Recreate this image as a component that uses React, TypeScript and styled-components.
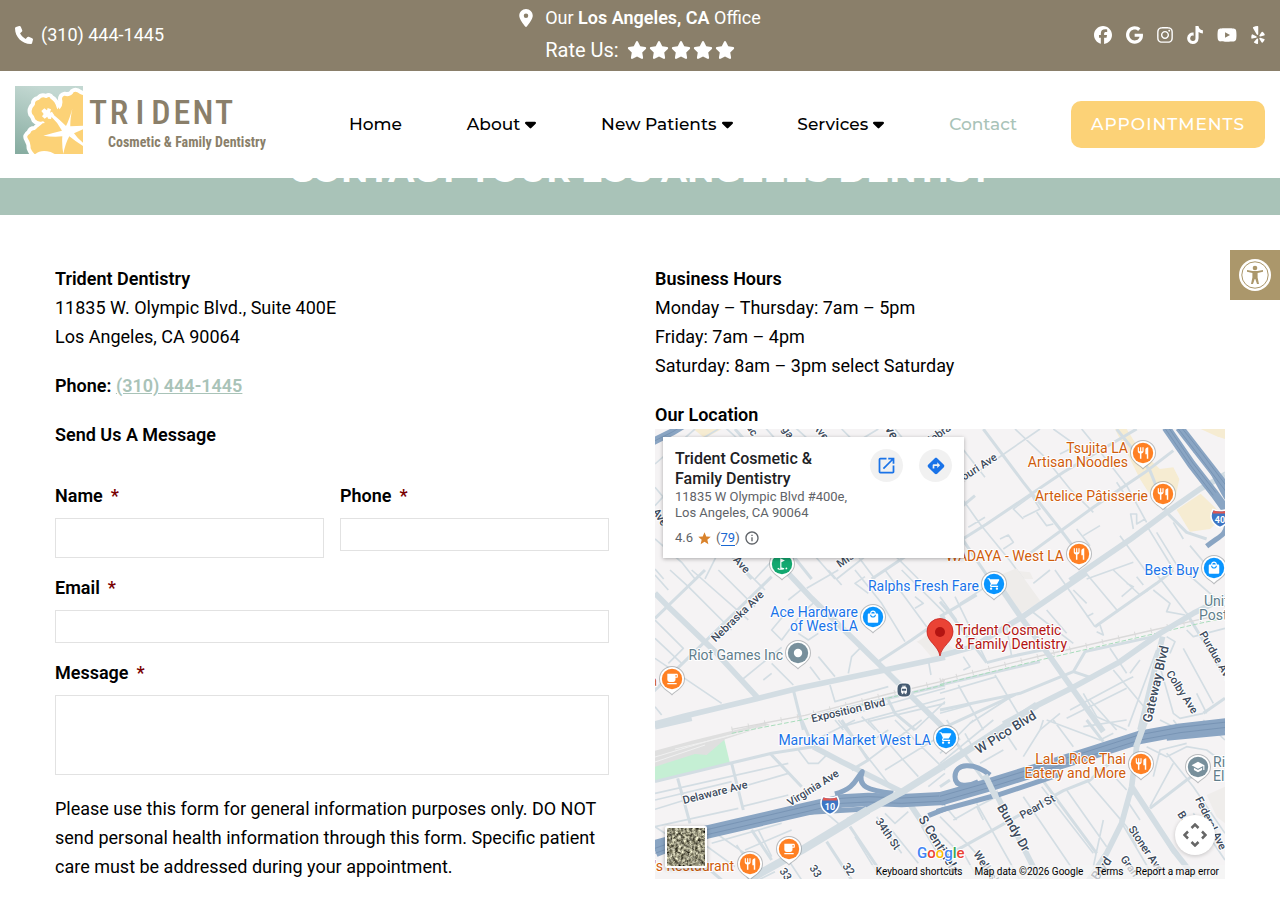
import React from 'react';
import styled, { createGlobalStyle } from 'styled-components';
import {
  FaPhone, FaLocationDot, FaStar, FaFacebook, FaGoogle, FaInstagram,
  FaTiktok, FaYoutube, FaYelp, FaCaretDown,
} from 'react-icons/fa6';
import {
  MdRestaurant, MdLocalCafe, MdShoppingCart, MdLocalMall, MdSchool, MdTram,
  MdGolfCourse, MdOpenInNew, MdDirections, MdInfoOutline, MdStar,
} from 'react-icons/md';
import type { IconType } from 'react-icons';

const color = {
  taupe: '#8a7f6a',
  sage: '#a9c3b8',
  sun: '#fcd277',
  gold: '#ab976b',
  line: '#e2e2e2',
  ink: '#000',
};
const display = '"Montserrat", "Inter", "Open Sans", sans-serif';

const GlobalStyle = createGlobalStyle`
  *, *::before, *::after { box-sizing: border-box; }
  body {
    margin: 0;
    background: #fff;
    color: ${color.ink};
    font: 400 18px/29px "Roboto", "Liberation Sans", sans-serif;
  }
  p, h1, h2 { margin: 0; }
  strong { font-weight: 600; }
  a { color: inherit; text-decoration: none; }
`;

/* ---------- header ---------- */

const Header = styled.header`
  position: fixed;
  z-index: 10;
  top: 0;
  left: 0;
  right: 0;
  background: #fff;
`;

const TopBar = styled.div`
  display: grid;
  grid-template-columns: 1fr auto 1fr;
  align-items: center;
  min-height: 71px;
  padding: 2px 15px 4px;
  background: ${color.taupe};
  color: #fff;
`;

const Glyph = styled.span<{ $w: number }>`
  display: block;
  flex: none;
  svg { display: block; width: ${p => p.$w}px; height: 18px; }
`;

const PhoneLink = styled.a`
  display: flex;
  align-items: center;
  gap: 8px;
  justify-self: start;
`;

const OfficeInfo = styled.div`
  display: flex;
  flex-direction: column;
  align-items: center;
  gap: 2px;
`;

const OfficeLink = styled.a`
  display: flex;
  align-items: center;
  gap: 12px;
`;

const Rating = styled.a`
  display: flex;
  align-items: center;
  gap: 8px;
  font-size: 20px;
  line-height: 32px;
`;

const Stars = styled.span`
  display: flex;
  gap: 2px;
`;

const Social = styled.div`
  display: flex;
  gap: 14px;
  justify-self: end;
`;

const NavBar = styled.div`
  display: flex;
  align-items: center;
  padding: 15px 15px 24px;
`;

const Logo = styled.a`
  flex: none;
  width: 250px;
  svg { display: block; }
`;

const Nav = styled.nav`
  display: flex;
  flex: 1;
  justify-content: space-between;
  margin: 8px 54px 0 84px;
`;

const NavLink = styled.a<{ $active?: boolean }>`
  display: flex;
  align-items: center;
  gap: 5px;
  color: ${p => (p.$active ? color.sage : color.ink)};
  font: 500 17px/29px ${display};
  white-space: nowrap;
`;

const Appointments = styled.a`
  margin-top: 8px;
  padding: 9px 20px;
  border-radius: 10px;
  background: ${color.sun};
  color: #fff;
  font: 500 17px/29px ${display};
  letter-spacing: 1px;
  text-transform: uppercase;
`;

/* ---------- page ---------- */

const Banner = styled.div`
  padding: 148px 15px 23px;
  background: ${color.sage};
  color: #fff;
  text-align: center;
`;

const BannerTitle = styled.h1`
  font: 700 34px/44px ${display};
  text-transform: uppercase;
`;

const Columns = styled.main`
  display: grid;
  grid-template-columns: 1fr 1fr;
  gap: 30px;
  max-width: 1200px;
  margin: 0 auto;
  padding: 49px 15px 19px;
`;

const Details = styled.section`
  display: flex;
  flex-direction: column;
  gap: 20px;
  padding-right: 16px;
`;

const Location = styled.section`
  display: flex;
  flex-direction: column;
  p { margin-bottom: 20px; }
`;

const Heading = styled.h2`
  font-size: 18px;
  font-weight: 600;
  line-height: 29px;
`;

const TextLink = styled.a`
  color: ${color.sage};
  text-decoration: underline;
`;

const Form = styled.form`
  display: flex;
  flex-direction: column;
  gap: 15px;
  padding-top: 12px;
`;

const FieldRow = styled.div`
  display: grid;
  grid-template-columns: 1fr 1fr;
  align-items: start;
  gap: 16px;
`;

const Field = styled.div`
  display: flex;
  flex-direction: column;
  gap: 8px;
`;

const Label = styled.label`
  font-weight: 600;
`;

const Required = styled.span`
  margin-left: 8px;
  color: #790000;
`;

const TextInput = styled.input<{ $tall?: boolean }>`
  width: 100%;
  height: ${p => (p.$tall ? 40 : 33)}px;
  padding: 4px 8px;
  border: 1px solid ${color.line};
  font: inherit;
`;

const MessageInput = styled.textarea`
  display: block;
  width: 100%;
  height: 80px;
  padding: 4px 8px;
  border: 1px solid ${color.line};
  font: inherit;
  resize: none;
`;

const Notice = styled.p`
  padding-top: 4px;
`;

const AccessButton = styled.button`
  position: fixed;
  z-index: 11;
  top: 250px;
  right: 0;
  display: grid;
  place-items: center;
  width: 50px;
  height: 50px;
  padding: 0;
  border: 0;
  background: ${color.gold};
`;

/* ---------- map ---------- */

const MapFrame = styled.div`
  position: relative;
  height: 450px;
  overflow: hidden;
  background: #f5f3f4;
`;

const MapSvg = styled.svg`
  display: block;
  width: 100%;
  height: 100%;
  font-family: "Roboto", sans-serif;
  text { paint-order: stroke; stroke: #fff; stroke-width: 2px; stroke-linejoin: round; }
`;

const PlaceCard = styled.div`
  position: absolute;
  top: 8px;
  left: 8px;
  display: flex;
  align-items: flex-start;
  gap: 16px;
  width: 301px;
  padding: 12px;
  background: #fff;
  box-shadow: 0 1px 4px rgba(0, 0, 0, 0.3);
`;

const PlaceText = styled.div`
  flex: 1;
  color: #5f6368;
  font-size: 13px;
  line-height: 16px;
  white-space: nowrap;
`;

const PlaceName = styled.div`
  color: #202124;
  font-size: 16px;
  font-weight: 500;
  line-height: 20px;
`;

const PlaceRating = styled.div`
  display: flex;
  align-items: center;
  gap: 4px;
  margin-top: 9px;
  a { color: #1967d2; border-bottom: 1px solid; }
`;

const PlaceButton = styled.button`
  display: grid;
  flex: none;
  place-items: center;
  width: 33px;
  height: 33px;
  padding: 0;
  border: 0;
  border-radius: 50%;
  background: #f1f1f1;
  color: #1a73e8;
`;

const SatelliteButton = styled.button`
  position: absolute;
  left: 10px;
  bottom: 11px;
  width: 42px;
  height: 42px;
  padding: 0;
  border: 2px solid #fff;
  border-radius: 2px;
  box-shadow: 0 1px 4px rgba(0, 0, 0, 0.3);
  svg { display: block; }
`;

const PanButton = styled.button`
  position: absolute;
  right: 10px;
  bottom: 24px;
  display: grid;
  place-items: center;
  width: 40px;
  height: 40px;
  padding: 0;
  border: 0;
  border-radius: 50%;
  background: #fff;
  box-shadow: 0 1px 4px rgba(0, 0, 0, 0.2);
`;

const MapFooter = styled.div`
  position: absolute;
  right: 0;
  bottom: 0;
  display: flex;
  color: #000;
  font-size: 10px;
  line-height: 14px;
  white-space: nowrap;
`;

const FooterItem = styled.a`
  padding: 0 6px;
  background: rgba(245, 245, 245, 0.7);
`;

const ROAD = '#d3dde3';
const FREEWAY = '#8aa5c3';
const FREEWAY_EDGE = '#6f8cad';

type TileData = {
  x: number;
  y: number;
  areas?: [string, string][];
  minor: string;
  medium?: string;
  major?: string;
  rail?: string;
  ramps?: string;
  freeway?: string;
  freewayWidth?: number;
  lanes?: string;
};

/* Road geometry, in units of a third of a map pixel, relative to each tile's origin. */
const tiles: TileData[] = [
  {
    x: 0, y: 0,
    areas: [['#f6ecd2', 'M115 0H200L150 28Z']],
    minor: 'M0 105L120 0M0 230L90 130M0 175L130 330M0 330L80 400L120 450M0 420L26 450M210 -5L260 40M330 -5L370 40M420 -5L470 40M560 0L600 40M140 30L190 0M620 30L670 0M800 40L860 0L880 -20M190 370L150 450M300 450L370 375M545 450L640 375M470 370L540 450M600 370L660 450M720 380L790 450M900 30L990 145M720 0L745 30',
    medium: 'M220 370L290 450M410 375L470 450M240 0L275 40M650 450L770 370M900 250L960 200',
    freeway: 'M-10 40L50 10L90 -14',
    freewayWidth: 22,
    lanes: 'M-10 40L50 10L90 -14',
  },
  {
    x: 305, y: 0,
    areas: [
      ['#f6ecd2', 'M465 0H500L540 65L600 120L640 115L658 150L645 212L592 232L540 150Z'],
      ['#f6ecd2', 'M650 242L722 194L792 262L750 300L690 308Z'],
      ['#f6ecd2', 'M722 0H795V30L770 22Z'],
      ['#efedeb', 'M165 425L210 430L220 450H150Z'],
    ],
    minor: 'M0 165L110 90L240 0M165 0L250 80L330 180L400 250M280 0L350 50L300 75M365 0L410 55L500 170L560 280M0 200L60 285L150 395L190 450M25 295L75 265M190 270L160 240L215 200L240 240L190 265M230 250L260 290L280 285M120 330L145 318L160 340L130 360M370 320L420 290M350 300L390 350M520 300L512 255L530 255L530 285L555 270M560 290L640 420M480 320L560 430M590 310L670 440M470 160L490 190M640 280L670 330M380 450L520 400M760 150L795 130M690 350L740 410',
    medium: 'M0 335L80 285L310 130L530 0M180 395L310 300L400 235L555 130L640 65M70 0L190 160L300 300L360 380M470 0L570 125L620 250L680 310L740 330M0 320L85 445',
    major: 'M330 455L510 332L620 250L720 180L795 138',
    ramps: 'M700 62C730 62 770 160 805 215M740 352C780 320 795 320 800 290',
    freeway: 'M618 -5L694 105L764 195L800 245M658 -5L724 80L810 190',
    freewayWidth: 26,
    lanes: 'M613 -5L690 107L760 199M623 -8L699 103L768 191M653 -3L719 83L798 188M664 -5L729 77L806 180',
  },
  {
    x: 0, y: 141,
    areas: [['#efedeb', 'M790 215L820 190L870 240V255L830 262Z']],
    minor: 'M0 15L40 60M45 0L100 50L230 180M110 0L280 150M190 0L300 110M270 0L330 60M0 150L85 235L40 280M0 205L80 280M0 265L200 400M150 215L205 270M0 410L20 435M260 330L380 232M350 280L415 345M325 330L350 310M455 55L550 0M520 0L560 45M600 0L680 100L750 215M690 0L815 170M740 0L870 130M820 270L828 315M525 345L540 395L700 350M490 260L540 320M580 310L590 260L620 230M400 90L440 58L480 95L440 130L380 210L350 180L400 120M430 190L460 210L490 190M465 290L495 330M540 450L565 480M620 440L660 480M560 470L870 385M780 480L870 395M600 430L870 355M640 455L870 400M630 20L600 40L640 70M780 80L805 100L780 115',
    medium: 'M0 145L150 0M-5 365L150 215L350 20M415 360L445 480M670 275L770 210L870 140M470 440L700 385L870 345M700 390L720 430L780 480',
    major: 'M0 70L40 110L180 245L310 385M395 5L470 85L690 300L760 370L870 478M0 462L90 438L305 386L430 355L690 300L870 262',
    rail: 'M230 478L450 436L700 372L870 332',
  },
  {
    x: 285, y: 141,
    areas: [['#eeecea', 'M155 25L230 -5L303 95L243 130Z'], ['#eeecea', 'M-70 215L-20 190L40 235L0 262Z']],
    minor: 'M0 80L50 150M45 80L140 275M170 30L60 100M280 40L330 0M270 120L400 220M320 120L380 190M345 0L465 170M430 0L535 125M480 165L490 195L470 185M520 0L600 75L625 60M590 20L610 45M545 80L580 50L560 40M640 60L690 100L680 125L735 135M640 0L740 130M730 0L855 110M0 370L170 320M55 345L130 480M165 315L240 440M90 460L230 370M0 430L90 405M510 235L560 310M520 300L620 420M390 420L540 340L580 320M380 445L560 355M430 370L470 440L560 480M565 470L650 240M660 290L700 430L720 445L790 430M730 235L820 400M680 200L705 215L690 250M740 180L760 200L855 175M770 370L800 430M600 270L570 310M450 390L530 480M200 170L215 260M70 260L90 290L70 300M400 60L440 100M440 140L460 130M300 480L360 430',
    medium: 'M0 420L240 370L400 305L460 325M400 305L435 245L640 200M140 278L210 260L330 235M140 278L30 130L0 95M0 140L110 75M465 170L650 40L700 0M0 345L300 275M0 478L230 372M740 130L855 320M790 430L855 385',
    major: 'M0 258L100 230L245 142L440 8M180 50L245 145L330 260L400 360L490 485M190 462L290 407L400 352L540 275L660 190L760 130L860 80M600 480L668 200',
    rail: 'M0 332L300 258L640 180L780 148L855 132',
  },
  {
    x: 0, y: 291,
    areas: [
      ['#c5efd4', 'M0 115L207 55L225 130L0 185Z'],
      ['#dfdfdf', 'M0 92L110 62L330 8L345 14L210 58L155 105L120 102L0 140Z'],
    ],
    minor: 'M0 220L400 130M0 240L230 185M0 268L90 240M110 245L400 160M0 320L250 265M260 260L400 225M310 330L350 410M150 375L240 440M190 345L270 400M170 370L380 310M270 390L410 330M430 90L460 130L490 130L520 100M0 320L60 360M665 290L740 400M515 280L555 315M690 280L720 310L760 275M550 0L700 190M640 0L745 120L790 170M480 60L600 0M640 120L800 0M690 150L870 40M720 0L870 150M820 200L870 160M310 480L360 455M600 350L680 480M400 420L440 480M245 375L300 460M800 320L860 420M640 70L700 30M710 330L790 430',
    medium: 'M0 185L225 130L350 100L475 80M68 175L105 310M230 130L265 270M345 100L440 200M440 0L475 80M515 365L590 480M585 320L690 475M560 0L640 120L590 150M290 330L350 420M60 360L200 480',
    major: 'M0 20L110 -5M475 80L560 125L740 215L810 320',
    ramps: 'M540 222C600 205 600 180 622 155C605 200 640 212 715 220M440 278L620 268L660 258M820 287L870 267',
    freeway: 'M0 392L60 368L160 335L450 268L560 243L640 238L740 242L870 235M0 380L80 358',
    lanes: 'M0 385L160 328L450 260L560 235L640 230L740 234L870 227M0 400L160 343L450 276L560 250L640 246L740 250L870 243',
  },
  {
    x: 285, y: 291,
    areas: [['#efedeb', 'M800 225L855 200V310L830 290Z']],
    minor: 'M0 130L160 0M0 100L100 0M20 0L60 60M75 40L100 85M120 130L190 90M250 110L300 30L310 0M340 0L400 80M230 90L190 30M320 0L480 60L520 40M430 20L560 0M110 260L40 300M60 380L110 470M110 250L240 480M250 230L420 480M305 200L460 400M440 180L560 320L590 380M380 210L500 380M505 150L560 210M680 100L760 200L855 340M660 0L720 30M700 130L630 260M0 290L90 380L180 480M170 230L110 260L130 300M490 300L460 440M640 170L660 90L740 70M580 220L560 240L600 300M620 80L680 110L740 80L800 90L855 130M760 280L855 420M540 300L640 470M0 340L60 400M700 0L730 40M790 0L855 60M0 240L50 300M620 270L700 400',
    medium: 'M60 385L230 290L370 212L450 180L520 120M630 265L740 180L800 140M440 0L490 65M50 70L130 178M300 170L470 400M0 410L60 385M0 200L30 180',
    major: 'M165 215L300 480M575 200L700 390L775 485M612 -5L590 80L575 200L545 310L500 400L440 490',
    ramps: 'M150 165C100 125 45 130 45 170C45 205 90 198 115 185M-10 274L160 228M175 225L355 165M680 55L855 38',
    freeway: 'M0 237L150 194L300 147L450 100L600 52L720 30L860 14',
    lanes: 'M0 229L150 186L300 139L450 92L600 44L720 22L860 6M0 245L150 202L300 155L450 108L600 60L720 38L860 22',
  },
];

const MapTiles = () => (
  <g fill="none" strokeLinejoin="round">
    {tiles.map(t => (
      <g key={`${t.x}-${t.y}`} transform={`translate(${t.x} ${t.y}) scale(0.3333)`}>
        {t.areas?.map(([fill, d]) => <path key={d} d={d} fill={fill} />)}
        <path d={t.minor} stroke={ROAD} strokeWidth="5" />
        <path d={t.medium} stroke={ROAD} strokeWidth="9" />
      </g>
    ))}
    <path d="M0 328L60 310L115 296M0 333L50 316M20 320L70 308L100 299" stroke="#f0f0f0" strokeWidth="1" />
    {tiles.map(t => (
      <g key={`${t.x}-${t.y}`} transform={`translate(${t.x} ${t.y}) scale(0.3333)`}>
        <path d={t.rail} stroke="#dadada" strokeWidth="4" />
        <path d={t.rail} stroke="#dadada" strokeWidth="16" strokeDasharray="3 47" />
        <path d={t.rail} stroke="#a9dcbc" strokeWidth="3" strokeDasharray="14 6" transform="translate(0 12)" />
        <path d={t.major} stroke={ROAD} strokeWidth="17" />
        <path d={t.ramps} stroke={FREEWAY} strokeWidth="15" />
        <path d={t.freeway} stroke={FREEWAY} strokeWidth={t.freewayWidth ?? 40} />
        <path d={t.lanes} stroke={FREEWAY_EDGE} strokeWidth="2" />
      </g>
    ))}
    <path d="M330 346L341 369M490 293L481 318" stroke={ROAD} strokeWidth="6" />
    <path d="M193 392L247 363L290 336L382 276" stroke={ROAD} strokeWidth="7" />
    <path d="M93 451L147 421L213 381" stroke={ROAD} strokeWidth="8" />
  </g>
);

type RoadName = { t: string; x: number; y: number; r: number; big?: boolean; at?: 'start' | 'end' };
const roadNames: RoadName[] = [
  { t: 'Nebraska Ave', x: 85, y: 190, r: -44 },
  { t: 'Exposition Blvd', x: 194, y: 285, r: -13 },
  { t: 'Purdue Ave', x: 544, y: 205, r: 60, at: 'start' },
  { t: 'Colby Ave', x: 524, y: 265, r: 57 },
  { t: 'Gateway Blvd', x: 505, y: 256, r: -77, big: true },
  { t: 'W Pico Blvd', x: 353, y: 307, r: -32, big: true },
  { t: 'Delaware Ave', x: 61, y: 367, r: -14 },
  { t: 'Virginia Ave', x: 160, y: 362, r: -32 },
  { t: '34th St', x: 230, y: 407, r: 56 },
  { t: 'S Centinela', x: 263, y: 390, r: 58, big: true, at: 'start' },
  { t: 'Bundy Dr', x: 355, y: 401, r: 60, big: true },
  { t: 'Pearl St', x: 384, y: 381, r: -29 },
  { t: 'Stoner Ave', x: 473, y: 400, r: 56, at: 'start' },
  { t: 'Federal Ave', x: 540, y: 370, r: 64, at: 'start' },
  { t: 'Wellesley', x: 318, y: 425, r: 56, at: 'start' },
  { t: 'Gran', x: 465, y: 430, r: 54, at: 'start' },
  { t: 'Ba', x: 522, y: 385, r: 58, at: 'start' },
  { t: 'Blvd', x: 450, y: 442, r: -55, big: true },
  { t: 'Missouri Ave', x: 343, y: 30, r: -33, at: 'end' },
  { t: 'Nebrask', x: 306, y: -6, r: -35, at: 'end' },
  { t: 'Ave', x: 163, y: 5, r: 52 },
  { t: 'Ave', x: 231, y: 2, r: 60, big: true },
  { t: 'ac', x: 94, y: 3, r: 58 },
  { t: 'ga', x: 130, y: 5, r: 56 },
  { t: 'Ave', x: 2, y: 90, r: 56 },
  { t: 'Ave', x: 84, y: 138, r: 48 },
  { t: 'Miss', x: 185, y: 139, r: -35, at: 'start' },
  { t: '33', x: 124, y: 442, r: 56, at: 'start' },
  { t: '33', x: 154, y: 439, r: 56, at: 'start' },
  { t: '32', x: 187, y: 437, r: 56, at: 'start' },
];

const ORANGE = '#cf5c0b';
const BLUE = '#1a73e8';
const SLATE = '#607d8b';
type PoiName = { t: string[]; x: number; y: number; c: string; at?: 'start' };
const poiNames: PoiName[] = [
  { t: ['Tsujita LA', 'Artisan Noodles'], x: 473, y: 24, c: ORANGE },
  { t: ['Artelice Pâtisserie'], x: 493, y: 72, c: ORANGE },
  { t: ['WADAYA - West LA'], x: 409, y: 132, c: ORANGE },
  { t: ['Best Buy'], x: 544, y: 146, c: BLUE },
  { t: ['Ralphs Fresh Fare'], x: 324, y: 162, c: BLUE },
  { t: ['Ace Hardware', 'of West LA'], x: 203, y: 188, c: BLUE },
  { t: ['Riot Games Inc'], x: 128, y: 231, c: SLATE },
  { t: ['Trident Cosmetic', '& Family Dentistry'], x: 300, y: 206, c: '#b31412', at: 'start' },
  { t: ['Unit'], x: 549, y: 177, c: SLATE, at: 'start' },
  { t: ['Post'], x: 544, y: 191, c: SLATE, at: 'start' },
  { t: ['Marukai Market West LA'], x: 276, y: 316, c: BLUE },
  { t: ['LaLa Rice Thai', 'Eatery and More'], x: 471, y: 335, c: ORANGE },
  { t: ['Ri', 'El'], x: 558, y: 338, c: SLATE, at: 'start' },
  { t: ["'s Restaurant"], x: 79, y: 442, c: ORANGE },
  { t: ['a'], x: 2, y: 257, c: ORANGE },
];

const pins: { x: number; y: number; c: string; icon?: IconType }[] = [
  { x: 488, y: 24, c: '#ff8023', icon: MdRestaurant },
  { x: 508, y: 65, c: '#ff8023', icon: MdRestaurant },
  { x: 424, y: 125, c: '#ff8023', icon: MdRestaurant },
  { x: 559, y: 139, c: '#0a95ff', icon: MdLocalMall },
  { x: 339, y: 155, c: '#0a95ff', icon: MdShoppingCart },
  { x: 218, y: 188, c: '#0a95ff', icon: MdLocalMall },
  { x: 143, y: 224, c: '#78909c' },
  { x: 17, y: 250, c: '#ff8023', icon: MdLocalCafe },
  { x: 127, y: 135, c: '#13a870', icon: MdGolfCourse },
  { x: 291, y: 309, c: '#0a95ff', icon: MdShoppingCart },
  { x: 486, y: 335, c: '#ff8023', icon: MdRestaurant },
  { x: 543, y: 338, c: '#78909c', icon: MdSchool },
  { x: 134, y: 420, c: '#ff8023', icon: MdLocalCafe },
  { x: 95, y: 435, c: '#ff8023', icon: MdRestaurant },
];

const Pin = ({ x, y, c, icon: Icon }: (typeof pins)[number]) => (
  <g transform={`translate(${x} ${y})`}>
    <path d="M0 16.5C-3 12.5-13 9-13 0A13 13 0 0 1 13 0C13 9 3 12.500 0 16.500Z" fill="#7d8388" opacity=".5" />
    <path d="M0 15C-3 11.500-12 8.500-12 0A12 12 0 0 1 12 0C12 8.500 3 11.500 0 15Z" fill="#fff" />
    <circle r="10.2" fill={c} />
    {Icon ? <Icon x="-7" y="-7" size={14} color="#fff" /> : <circle r="4.2" fill="#fff" />}
  </g>
);

const ShieldNumber = styled.text`
  && { stroke: none; }
`;

const Shield = ({ x, y, n }: { x: number; y: number; n: string }) => (
  <g transform={`translate(${x} ${y})`}>
    <path d="M-7-8.500Q0-6 7-8.500Q10-4 8.500 1Q7 6.500 0 9.500Q-7 6.500-8.500 1Q-10-4-7-8.500Z" fill="#3d76c4" stroke="#fff" strokeWidth="1.5" />
    <path d="M-6.500-7.500Q0-5.500 6.500-7.500L7.500-4.500H-7.500Z" fill="#e2564f" />
    <ShieldNumber y="5" textAnchor="middle" fontSize="9" fontWeight="700" fill="#fff">{n}</ShieldNumber>
  </g>
);

const MapDrawing = () => (
  <MapSvg viewBox="0 0 570 450" preserveAspectRatio="xMidYMid slice" role="img" aria-label="Map of West Los Angeles">
    <MapTiles />
    <g fill="#3c4a5c" fontWeight="500">
      {roadNames.map((n, i) => (
        <text
          key={i}
          transform={`translate(${n.x} ${n.y}) rotate(${n.r})`}
          textAnchor={n.at ?? 'middle'}
          fontSize={n.big ? 13 : 11}
        >
          {n.t}
        </text>
      ))}
    </g>
    <Shield x={175} y={376} n="10" />
    <Shield x={565} y={89} n="40" />
    <g transform="translate(249 261)">
      <rect x="-7" y="-7" width="14" height="14" rx="5" fill="#455a70" stroke="#fff" />
      <MdTram x="-5" y="-5" size={10} color="#fff" />
    </g>
    {poiNames.map(p => (
      <text key={p.t[0]} textAnchor={p.at ?? 'end'} fontSize="14" fill={p.c}>
        {p.t.map((line, i) => <tspan key={line} x={p.x} y={p.y + i * 14}>{line}</tspan>)}
      </text>
    ))}
    {pins.map(p => <Pin key={`${p.x}-${p.y}`} {...p} />)}
    <path d="M285 227C283 216 272 213 272 202.500A13 13 0 0 1 298 202.500C298 213 287 216 285 227Z" fill="#ea4335" stroke="#c5221f" strokeWidth=".8" />
    <circle cx="285" cy="203" r="5" fill="#b31412" />
    <text x="262" y="429" fontSize="15" fontWeight="500">
      <tspan fill="#4285f4">G</tspan><tspan fill="#ea4335">o</tspan><tspan fill="#fbbc04">o</tspan>
      <tspan fill="#4285f4">g</tspan><tspan fill="#34a853">l</tspan><tspan fill="#ea4335">e</tspan>
    </text>
  </MapSvg>
);

const SatelliteTexture = () => (
  <svg width="38" height="38" aria-hidden="true">
    <filter id="terrain" x="0" y="0" width="100%" height="100%" colorInterpolationFilters="sRGB">
      <feTurbulence type="fractalNoise" baseFrequency="0.35" numOctaves="3" seed="4" />
      <feColorMatrix values="1.3 0.5 0 0 -0.32  1.3 0.5 0 0 -0.33  1.2 0.4 0 0 -0.32  0 0 0 0 1" />
    </filter>
    <rect width="38" height="38" filter="url(#terrain)" />
  </svg>
);

const OfficeMap = () => (
  <MapFrame>
    <MapDrawing />
    <PlaceCard>
      <PlaceText>
        <PlaceName>Trident Cosmetic &amp;<br />Family Dentistry</PlaceName>
        11835 W Olympic Blvd #400e,<br />Los Angeles, CA 90064
        <PlaceRating>
          4.6 <MdStar size={15} color="#d9822b" /> <span>(<a href="#reviews">79</a>)</span>
          <MdInfoOutline size={16} />
        </PlaceRating>
      </PlaceText>
      <PlaceButton type="button" aria-label="Open in Maps"><MdOpenInNew size={21} /></PlaceButton>
      <PlaceButton type="button" aria-label="Directions"><MdDirections size={20} /></PlaceButton>
    </PlaceCard>
    <SatelliteButton type="button" aria-label="Show satellite imagery"><SatelliteTexture /></SatelliteButton>
    <PanButton type="button" aria-label="Map camera controls">
      <svg width="24" height="24" viewBox="0 0 24 24" fill="none" stroke="#666" strokeWidth="2.5">
        <path d="M8.500 5L12 1.500L15.500 5M8.500 19L12 22.500L15.500 19M5 8.500L1.500 12L5 15.500M19 8.500L22.500 12L19 15.500" />
      </svg>
    </PanButton>
    <MapFooter>
      <FooterItem href="#shortcuts">Keyboard shortcuts</FooterItem>
      <FooterItem as="span">Map data ©2026 Google</FooterItem>
      <FooterItem href="#terms">Terms</FooterItem>
      <FooterItem href="#report">Report a map error</FooterItem>
    </MapFooter>
  </MapFrame>
);

/* ---------- logo and accessibility mark ---------- */

const LogoText = styled.text`
  fill: ${color.taupe};
  font-family: "Liberation Sans Narrow", "Roboto Condensed", "DejaVu Sans Condensed", "Roboto", sans-serif;
  text-anchor: middle;
`;

const LogoMark = () => (
  <svg width="251" height="68" viewBox="0 0 251 68" role="img" aria-label="Trident Cosmetic and Family Dentistry">
    <defs>
      <linearGradient id="sea" x1="0.3" y1="0" x2="0" y2="1">
        <stop offset="0" stopColor="#c3d8d2" />
        <stop offset="1" stopColor="#85ab9f" />
      </linearGradient>
    </defs>
    <svg width="68" height="68" viewBox="45 258 204 204">
      <rect x="45" y="258" width="204" height="204" fill="url(#sea)" />
      <path
        d="M265 280Q252 282 242 276Q228 264 216 273Q210 286 194 281Q180 284 180 298Q184 312 176 322Q170 300 156 292Q150 281 138 288Q124 282 114 294Q98 298 99 312Q84 326 91 344Q98 350 101 362Q112 374 128 370Q110 374 104 384Q90 384 86 396Q70 406 79 420Q86 430 86 446Q92 462 104 470H265Z"
        fill={color.sun} stroke="#fff" strokeWidth="12" strokeLinejoin="round"
      />
      <path d="M128 370Q142 366 152 374L176 322Q182 340 190 350L200 420L140 452L108 452L94 400Z" fill={color.sun} />
      <path d="M104 464Q120 448 152 456L172 466H104Z" fill="#fff" />
      <path d="M217 326Q210 358 211 379L252 377V386L222 400Q234 418 252 430V440Q226 424 208 409Q196 430 190 462Q185 434 187 409Q160 412 130 407Q160 398 186 392Q172 366 152 348L158 342Q180 360 198 378Q208 358 217 326Z" fill="#fff" />
      <path d="M124 333l9-8l8 6l2-7l10 4l-3 10l6-3l6 10l-7 5l-2 7l-9-1l-2-6l-8 6l-8-7l5-7z" fill="#fff" />
    </svg>
    <g aria-hidden="true">
      {'TRIDENT'.split('').map((ch, i) => (
        <LogoText key={i} x={83 + i * 21} y="38" fontSize="34" fontWeight="500">{ch}</LogoText>
      ))}
    </g>
    <LogoText x="172" y="61" fontSize="14" fontWeight="700">Cosmetic &amp; Family Dentistry</LogoText>
  </svg>
);

const AccessMark = () => (
  <svg width="32" height="32" viewBox="0 0 32 32" aria-hidden="true">
    <circle cx="16" cy="16" r="16" fill="#fff" />
    <circle cx="16" cy="16" r="13.2" fill="none" stroke={color.gold} strokeWidth="1" />
    <circle cx="16" cy="9" r="2.3" fill={color.gold} />
    <path d="M8 11L13.500 12H18.500L24 11V12.800L18.600 14V18.500L20 25H18L16.300 20H15.700L14 25H12L13.400 18.500V14L8 12.800Z" fill={color.gold} />
  </svg>
);

/* ---------- app ---------- */

const socials: [string, IconType, number][] = [
  ['Facebook', FaFacebook, 18], ['Google', FaGoogle, 17], ['Instagram', FaInstagram, 16],
  ['TikTok', FaTiktok, 16], ['YouTube', FaYoutube, 20], ['Yelp', FaYelp, 14],
];

const navItems: { label: string; menu?: boolean; active?: boolean }[] = [
  { label: 'Home' },
  { label: 'About', menu: true },
  { label: 'New Patients', menu: true },
  { label: 'Services', menu: true },
  { label: 'Contact', active: true },
];

const FieldLabel = ({ htmlFor, children }: { htmlFor: string; children: React.ReactNode }) => (
  <Label htmlFor={htmlFor}>{children}<Required>*</Required></Label>
);

export default function App() {
  return (
    <>
      <GlobalStyle />
      <Header>
        <TopBar>
          <PhoneLink href="tel:3104441445"><Glyph $w={18}><FaPhone /></Glyph>(310) 444-1445</PhoneLink>
          <OfficeInfo>
            <OfficeLink href="#map">
              <Glyph $w={14}><FaLocationDot /></Glyph>
              <span>Our <strong>Los Angeles, CA</strong> Office</span>
            </OfficeLink>
            <Rating href="#review">
              Rate Us: <Stars>{[1, 2, 3, 4, 5].map(n => <Glyph key={n} $w={20}><FaStar /></Glyph>)}</Stars>
            </Rating>
          </OfficeInfo>
          <Social>
            {socials.map(([name, Icon, width]) => (
              <a key={name} href={`#${name}`} aria-label={name}><Glyph $w={width}><Icon /></Glyph></a>
            ))}
          </Social>
        </TopBar>
        <NavBar>
          <Logo href="#home"><LogoMark /></Logo>
          <Nav>
            {navItems.map(item => (
              <NavLink key={item.label} href={`#${item.label}`} $active={item.active}>
                {item.label}{item.menu && <Glyph $w={11}><FaCaretDown /></Glyph>}
              </NavLink>
            ))}
          </Nav>
          <Appointments href="#appointments">Appointments</Appointments>
        </NavBar>
      </Header>

      <Banner><BannerTitle>Contact Your Los Angeles Dentist</BannerTitle></Banner>

      <Columns>
        <Details>
          <p><strong>Trident Dentistry</strong><br />11835 W. Olympic Blvd., Suite 400E<br />Los Angeles, CA 90064</p>
          <p><strong>Phone: <TextLink href="tel:3104441445">(310) 444-1445</TextLink></strong></p>
          <Heading>Send Us A Message</Heading>
          <Form>
            <FieldRow>
              <Field>
                <FieldLabel htmlFor="name">Name</FieldLabel>
                <TextInput id="name" type="text" $tall />
              </Field>
              <Field>
                <FieldLabel htmlFor="phone">Phone</FieldLabel>
                <TextInput id="phone" type="tel" />
              </Field>
            </FieldRow>
            <Field>
              <FieldLabel htmlFor="email">Email</FieldLabel>
              <TextInput id="email" type="email" />
            </Field>
            <Field>
              <FieldLabel htmlFor="message">Message</FieldLabel>
              <MessageInput id="message" />
            </Field>
            <Notice>
              Please use this form for general information purposes only. DO NOT send personal health
              information through this form. Specific patient care must be addressed during your appointment.
            </Notice>
          </Form>
        </Details>
        <Location id="map">
          <p>
            <strong>Business Hours</strong><br />Monday – Thursday: 7am – 5pm<br />Friday: 7am – 4pm<br />
            Saturday: 8am – 3pm select Saturday
          </p>
          <Heading>Our Location</Heading>
          <OfficeMap />
        </Location>
      </Columns>

      <AccessButton type="button" aria-label="Accessibility options"><AccessMark /></AccessButton>
    </>
  );
}
